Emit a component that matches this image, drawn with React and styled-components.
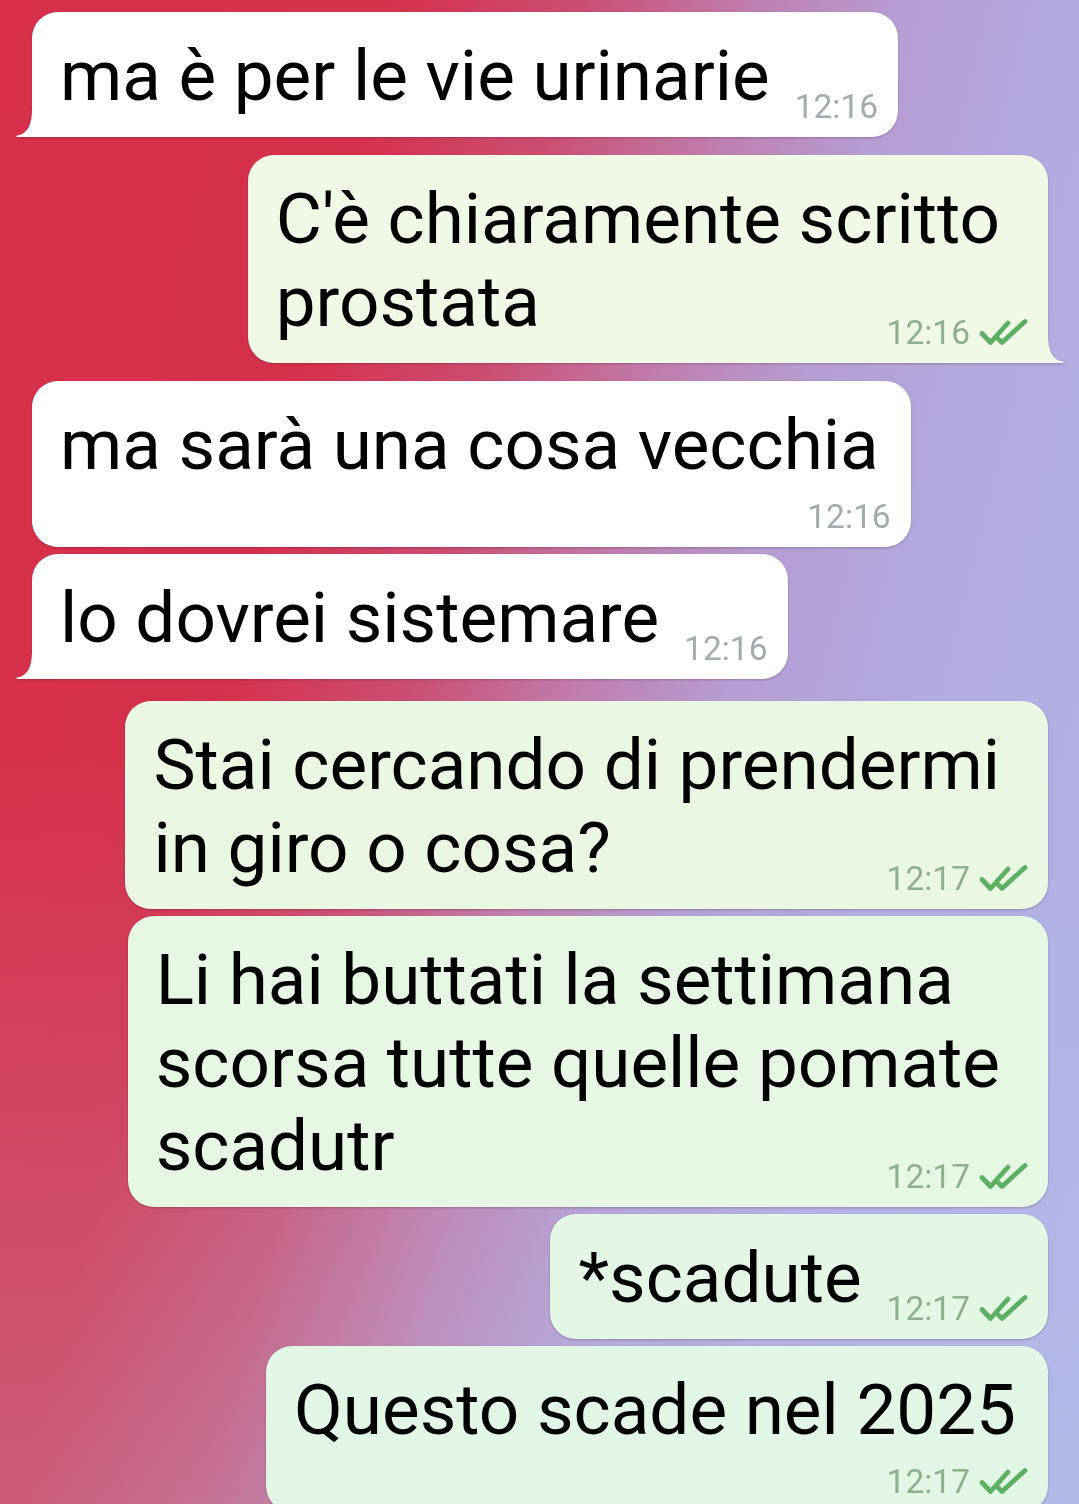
import React from "react";
import styled, { createGlobalStyle } from "styled-components";

const Global = createGlobalStyle`
  html, body { margin: 0; padding: 0; height: 1504px; overflow: hidden; }
  body { font-family: Roboto, "Noto Sans", sans-serif; }
`;

const Screen = styled.div`
  width: 1079px;
  height: 1504px;
  overflow: hidden;
  box-sizing: border-box;
  padding-top: 12px;
  display: flex;
  flex-direction: column;
  background:
    linear-gradient(180deg, rgba(182, 205, 236, 0) 50%, rgba(182, 205, 236, 0.28) 100%),
    linear-gradient(104deg, #d8304a 0%, #d5314c 27%, #cb4e72 40%, #bf7fb0 52%, #b69dd3 62%, #b2abe0 75%, #b2b3e6 100%);
`;

const Row = styled.div`
  display: flex;
  justify-content: ${(p) => (p.$out ? "flex-end" : "flex-start")};
  padding: 0 31px 0 32px;
  margin-top: ${(p) => p.$gap}px;
`;

const Bubble = styled.div`
  position: relative;
  box-sizing: border-box;
  padding: 22px 20px 11px 28px;
  background: ${(p) => p.$bg};
  border-radius: 26px;
  ${(p) => (p.$tail && !p.$out ? "border-bottom-left-radius: 0;" : "")}
  ${(p) => (p.$tail && p.$out ? "border-bottom-right-radius: 0;" : "")}
  filter: drop-shadow(0 1px 1px rgba(60, 20, 40, 0.28));
  display: flex;
  flex-direction: column;
  color: #000;
`;

const Line = styled.div`
  font-family: Roboto, "Noto Sans", sans-serif;
  font-size: 71px;
  line-height: 83px;
  white-space: nowrap;
  padding-right: 28px;
`;

const LastRow = styled.div`
  display: flex;
  flex-direction: ${(p) => (p.$block ? "column" : "row")};
  align-items: flex-end;
  column-gap: 25px;
`;

const LastText = styled.div`
  font-family: Roboto, "Noto Sans", sans-serif;
  font-size: 71px;
  line-height: 83px;
  white-space: nowrap;
  margin-bottom: ${(p) => (p.$block ? 0 : 9)}px;
  padding-right: ${(p) => (p.$block ? 12 : 0)}px;
  align-self: flex-start;
`;

const Meta = styled.div`
  display: flex;
  align-items: center;
  gap: 8px;
  margin-left: auto;
  margin-top: ${(p) => (p.$block ? 12 : 0)}px;
  font-family: Roboto, "Noto Sans", sans-serif;
  font-size: 33.5px;
  line-height: 38px;
  color: ${(p) => (p.$out ? "#8fb08f" : "#a2abae")};
  white-space: nowrap;
`;

const TailSvg = styled.svg`
  position: absolute;
  bottom: 0;
  width: 18px;
  height: 28px;
  ${(p) => (p.$out ? "right: -16px; transform: scaleX(-1);" : "left: -16px;")}
`;

const Tail = ({ out, color }) => (
  <TailSvg $out={out} viewBox="0 0 18 28">
    <path d="M16 0 C16 15 12 24.5 1.5 26.6 C-0.3 27 0 28 1.8 28 L18 28 L18 0 Z" fill={color} />
  </TailSvg>
);

const Checks = () => (
  <svg width="50" height="30" viewBox="0 0 50 30" fill="none">
    <path d="M4 15.5 L12.5 24.5 L30 5" stroke="#5caf63" strokeWidth="4.8" strokeLinecap="round" strokeLinejoin="round" />
    <path d="M20.5 21 L24 24.5 L47 3.5" stroke="#5caf63" strokeWidth="4.8" strokeLinecap="round" strokeLinejoin="round" />
  </svg>
);

const messages = [
  { out: false, gap: 0, tail: true, lines: ["ma è per le vie urinarie"], time: "12:16" },
  { out: true, gap: 18, tail: true, lines: ["C'è chiaramente scritto", "prostata"], time: "12:16", bg: "#f0f9e5" },
  { out: false, gap: 18, lines: ["ma sarà una cosa vecchia"], time: "12:16", block: true },
  { out: false, gap: 7, tail: true, lines: ["lo dovrei sistemare"], time: "12:16" },
  { out: true, gap: 22, lines: ["Stai cercando di prendermi", "in giro o cosa?"], time: "12:17", bg: "#eaf8e3" },
  { out: true, gap: 7, lines: ["Li hai buttati la settimana", "scorsa tutte quelle pomate", "scadutr"], time: "12:17", bg: "#e6f7e3" },
  { out: true, gap: 7, lines: ["*scadute"], time: "12:17", bg: "#e3f7e4" },
  { out: true, gap: 7, lines: ["Questo scade nel 2025"], time: "12:17", bg: "#e1f6e5", block: true },
];

const Message = ({ m }) => {
  const bg = m.out ? m.bg : "#ffffff";
  const last = m.lines[m.lines.length - 1];
  return (
    <Row $out={m.out} $gap={m.gap}>
      <Bubble $out={m.out} $tail={m.tail} $bg={bg}>
        {m.lines.slice(0, -1).map((l, i) => (
          <Line key={i}>{l}</Line>
        ))}
        <LastRow $block={m.block}>
          <LastText $block={m.block}>{last}</LastText>
          <Meta $out={m.out} $block={m.block}>
            <span>{m.time}</span>
            {m.out && <Checks />}
          </Meta>
        </LastRow>
        {m.tail && <Tail out={m.out} color={bg} />}
      </Bubble>
    </Row>
  );
};

export default function App() {
  return (
    <>
      <Global />
      <Screen>
        {messages.map((m, i) => (
          <Message key={i} m={m} />
        ))}
      </Screen>
    </>
  );
}
